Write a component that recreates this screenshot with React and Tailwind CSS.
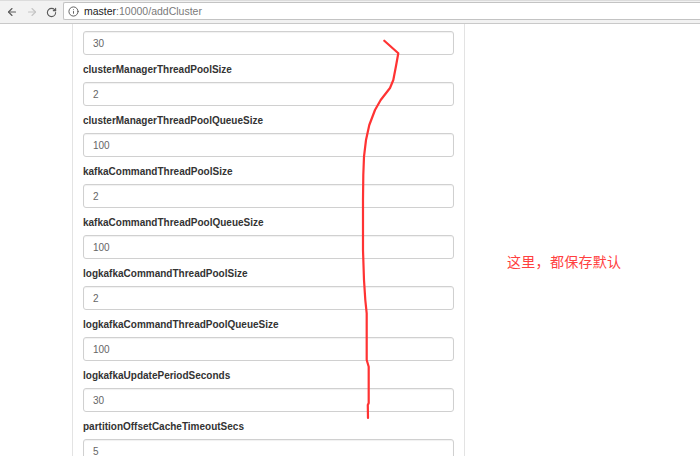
import React from "react";
import { ArrowLeft, ArrowRight, RotateCw, Info } from "lucide-react";

const fields = [
  ["brokerViewUpdatePeriodSeconds", "30"],
  ["clusterManagerThreadPoolSize", "2"],
  ["clusterManagerThreadPoolQueueSize", "100"],
  ["kafkaCommandThreadPoolSize", "2"],
  ["kafkaCommandThreadPoolQueueSize", "100"],
  ["logkafkaCommandThreadPoolSize", "2"],
  ["logkafkaCommandThreadPoolQueueSize", "100"],
  ["logkafkaUpdatePeriodSeconds", "30"],
  ["partitionOffsetCacheTimeoutSecs", "5"],
];

export default function App() {
  return (
    <div
      className="relative w-[700px] h-[456px] overflow-hidden bg-white flex flex-col"
      style={{ fontFamily: '"Liberation Sans", Arial, sans-serif' }}
    >
      {/* browser toolbar */}
      <div className="relative z-10 h-[24px] shrink-0 bg-[#f2f2f2] border-t border-t-[#dcdcdc] border-b border-b-[#c9c9c9] flex items-center">
        <div className="flex items-center w-[63px] pl-[6px] gap-[8px]">
          <ArrowLeft size={12} strokeWidth={2.2} className="text-[#5a5a5a]" />
          <ArrowRight size={12} strokeWidth={2.2} className="text-[#c4c4c4]" />
          <RotateCw size={11} strokeWidth={2.4} className="text-[#5a5a5a]" />
        </div>
        <div className="flex-1 h-[18px] -mt-[2px] bg-white border border-[#c3c3c3] border-r-0 rounded-l-[2px] flex items-center pl-[4px] -mr-[4px]">
          <Info size={11} strokeWidth={2} className="text-[#555]" />
          <span className="ml-[5px] text-[10.5px] leading-none">
            <span className="text-[#222]">master</span>
            <span className="text-[#7a7a7a]">:10000/addCluster</span>
          </span>
        </div>
      </div>

      {/* page */}
      <div className="flex flex-1 min-h-0">
        <div className="w-[72px] shrink-0" />
        <div className="w-[393px] shrink-0 border-l border-r border-[#e3e3e3] px-[10px] overflow-hidden">
          <div className="-mt-[12px]">
            {fields.map(([label, value]) => (
              <div key={label} className="mb-[8px]">
                <div className="text-[10px] leading-[14px] font-bold text-[#333] mb-[5px]">
                  {label}
                </div>
                <div className="h-[24px] border border-[#d0d0d0] rounded-[3px] shadow-[inset_0_1px_1px_rgba(0,0,0,0.06)] flex items-center pl-[9px] text-[10px] text-[#666]">
                  {value}
                </div>
              </div>
            ))}
          </div>
        </div>
        <div className="flex-1 pl-[42px] pt-[227px]">
          <div
            className="text-[14px] leading-[20px] text-[#ff4040] tracking-[0.3px]"
            style={{ fontFamily: '"Noto Sans CJK SC", "Liberation Sans", sans-serif' }}
          >
            这里，都保存默认
          </div>
        </div>
      </div>

      {/* hand-drawn annotation */}
      <svg
        className="absolute left-0 top-0 pointer-events-none z-20"
        width="700"
        height="456"
        viewBox="0 0 700 456"
      >
        <path
          d="M384.3,40.7 L398.3,53.3 L396,66 L393.3,80 L390,88 L380.7,100 L375,110 L369.3,125 L366,140 L364,156.7 L363.3,175 L363,200 L363,250 L364,280 L365.3,300 L366.7,313.3 L366.7,360 L368.7,366.7 L368.7,403 L367.8,405 L368,418"
          fill="none"
          stroke="#ff3333"
          strokeWidth="2.2"
          strokeLinecap="round"
          strokeLinejoin="round"
        />
      </svg>
    </div>
  );
}
